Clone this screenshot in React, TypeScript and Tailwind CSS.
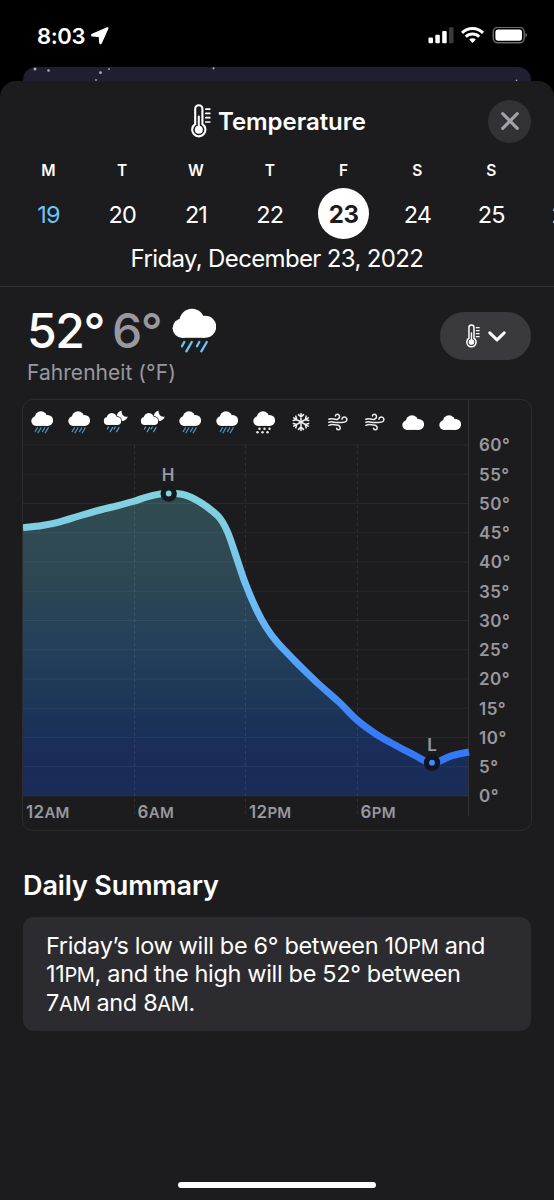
import React from "react";

const DAYS = [
  ["M", "19"],
  ["T", "20"],
  ["W", "21"],
  ["T", "22"],
  ["F", "23"],
  ["S", "24"],
  ["S", "25"],
];

const CURVE: [number, number][] = [
  [0, 527.7], [19, 525.5], [37, 521.8], [56, 516], [77, 510], [94, 505.8], [110, 501.5],
  [124, 497], [135, 494.4], [145.7, 493.3], [159, 494.2], [168, 497.2], [178, 502.8], [188, 510],
  [197.5, 519], [205, 533], [212, 553], [222.2, 583], [233.2, 609], [243, 627], [254, 642],
  [271, 660], [283, 672], [295, 683.5], [317, 703], [334, 720], [354, 734.7], [374, 746],
  [393, 756], [402, 761], [409, 763], [416, 761.5], [427, 756.3], [446, 752],
];

function smooth(points: [number, number][]) {
  const p = points.map(([x, y]) => [x, y - 400]);
  let d = `M${p[0][0]} ${p[0][1]}`;
  for (let i = 0; i < p.length - 1; i++) {
    const a = p[Math.max(i - 1, 0)];
    const b = p[i];
    const c = p[i + 1];
    const e = p[Math.min(i + 2, p.length - 1)];
    d += `C${b[0] + (c[0] - a[0]) / 6} ${b[1] + (c[1] - a[1]) / 6} ${c[0] - (e[0] - b[0]) / 6} ${c[1] - (e[1] - b[1]) / 6} ${c[0]} ${c[1]}`;
  }
  return d;
}

const LINE = smooth(CURVE);

function Thermometer({ className }: { className?: string }) {
  return (
    <svg viewBox="0 0 20 34" className={className} fill="none" stroke="#fff" strokeLinecap="round">
      <path d="M4.2 20.2V4.800a3.600 3.600 0 0 1 7.200 0v15.400a6.600 6.600 0 1 1-7.200 0Z" strokeWidth="2.100" />
      <path d="M7.800 12.500v12" strokeWidth="2" />
      <circle cx="7.800" cy="25.700" r="4" fill="#fff" stroke="none" />
      <path d="M14.800 5.100h4M14.800 9.400h4M14.800 13.700h4M14.800 18h4" strokeWidth="1.700" />
    </svg>
  );
}

function CloudShape() {
  return (
    <g fill="#fff">
      <circle cx="20" cy="13.3" r="12.6" />
      <circle cx="33.2" cy="18.8" r="11" />
      <circle cx="10.3" cy="20.2" r="9.7" />
      <rect x="10" y="14" width="23.2" height="15.8" />
    </g>
  );
}

function Rain({ className }: { className?: string }) {
  return (
    <svg viewBox="0 0 44 45" className={className}>
      <CloudShape />
      <path
        d="M12.3 34 10 38.200M19.800 34l-5.500 9.300M27.300 34 25 38.200M34.800 34l-5.500 9.300"
        stroke="#6cc5f5"
        strokeWidth="2.300"
        strokeLinecap="round"
      />
    </svg>
  );
}

function SmallRain() {
  return (
    <svg viewBox="0 0 44 46" className="h-[23px] w-[22px]">
      <CloudShape />
      <path d="M13 33.500 8.500 41M20 33.500l-6 10M27.500 33.500 23 41M34.500 33.500l-6 10" stroke="#4a92bd" strokeWidth="2.700" strokeLinecap="round" />
    </svg>
  );
}

function NightRain() {
  return (
    <svg viewBox="0 0 25 24" className="h-6 w-[25px]">
      <path
        d="M18.600 .4C15.400 1.200 13.400 4 13.900 7 14.500 10 17.400 11.400 20.200 10.900c2.300-.4 4.100-2 4.600-4.300-1.700 .5-3.200 .2-4.300-.9C19.100 4.300 18.400 2.400 18.600 .4Z"
        fill="#fff"
      />
      <g transform="translate(.6 2.700) scale(.41)">
        <g stroke="#1c1c1e" strokeWidth="3.600">
          <circle cx="20" cy="13.300" r="12.600" />
          <circle cx="33" cy="20" r="9.800" />
        </g>
        <g fill="#fff">
          <circle cx="20" cy="13.300" r="12.600" />
          <circle cx="33" cy="20" r="9.800" />
          <circle cx="10.300" cy="20.200" r="9.700" />
          <rect x="10" y="14" width="23" height="15.800" />
        </g>
      </g>
      <path d="m5.600 17-1.200 2M9.600 17.500l-2.400 4.200M12.300 17l-1.200 2M16 17.500l-2.400 4.200" stroke="#56a9d8" strokeWidth="1.200" strokeLinecap="round" />
    </svg>
  );
}

function Snow() {
  return (
    <svg viewBox="0 0 44 46" className="h-[23px] w-[22px]">
      <CloudShape />
      <g fill="#e8e8ea">
        <circle cx="13" cy="35.500" r="2.500" />
        <circle cx="23" cy="35.500" r="2.500" />
        <circle cx="33" cy="35.500" r="2.500" />
        <circle cx="9" cy="42.500" r="2.500" />
        <circle cx="19" cy="42.500" r="2.500" />
        <circle cx="29" cy="42.500" r="2.500" />
      </g>
    </svg>
  );
}

function Snowflake() {
  return (
    <svg viewBox="-10 -10 20 20" className="h-5 w-5" fill="none" stroke="#f2f2f4" strokeWidth="1.500" strokeLinecap="round">
      {[0, 60, 120, 180, 240, 300].map((a) => (
        <path key={a} transform={`rotate(${a})`} d="M0 0V-8.400M-2.500-7.400 0-5l2.500-2.400" />
      ))}
    </svg>
  );
}

function Wind() {
  return (
    <svg viewBox="0 0 20 18" className="h-[18px] w-5" fill="none" stroke="#ececee" strokeWidth="1.500" strokeLinecap="round">
      <path d="M.9 6.200c3.300-1.500 5.200 .8 8.300 .2 3.200-.8 2.900-5.200 .2-5.100-1.200 0-1.900 .8-1.900 1.600" />
      <path d="M.9 9.300c3.600-1.400 5.600 .6 9.400 .2 3-.3 6.100 .6 7.900-1.200 1.500-1.800 .3-4.300-1.900-4.300-1.500 0-2.400 1.100-2.300 2.200" />
      <path d="M.9 12.300c3.200-1.600 5.200-.4 8-.4 3.600 .1 4.500 4.900 1.400 4.900-1.100 0-1.700-.7-1.700-1.500" />
    </svg>
  );
}

function Cloud() {
  return (
    <svg viewBox="0 0 44 30" className="ml-px mt-px h-[15px] w-[22px]">
      <CloudShape />
    </svg>
  );
}

const HOURS = [SmallRain, SmallRain, NightRain, NightRain, SmallRain, SmallRain, Snow, Snowflake, Wind, Wind, Cloud, Cloud];

function StatusBar() {
  return (
    <div className="flex h-[67px] items-start pl-[37px] pr-[27px] pt-[22px]">
      <span className="w-12 text-[22px] font-semibold leading-7 tracking-[-0.4px]">8:03</span>
      <svg viewBox="0 0 18 18" className="ml-[6px] mt-[5px] h-[18px] w-[18px]">
        <path d="M16.200 .9 1.300 7.300c-.9 .4-.7 1.700 .3 1.700l6.600 .4.600 6.400c0 1 1.100 1.200 1.500 .3L16.800 1.500c.2-.5-.1-.8-.6-.6Z" fill="#fff" stroke="#fff" strokeWidth="1.200" strokeLinejoin="round" />
      </svg>
      <svg viewBox="0 0 100 18" className="ml-auto mt-[5px] h-[18px] w-[100px]">
        <rect x="1.500" y="10.500" width="4.500" height="5.700" rx="1" fill="#fff" />
        <rect x="8.300" y="7.800" width="4.500" height="8.400" rx="1" fill="#fff" />
        <rect x="15.200" y="4" width="4.500" height="12.200" rx="1" fill="#fff" />
        <rect x="22" y="0.300" width="4.500" height="15.900" rx="1" fill="#3a3a3a" />
        <g fill="none" stroke="#fff" strokeWidth="3">
          <path d="M35 5.900a15 15 0 0 1 21 0" />
          <path d="M38.800 9.700a9.600 9.600 0 0 1 13.400 0" />
        </g>
        <path d="M42.200 12.600a4.700 4.700 0 0 1 6.600 0L45.500 16Z" fill="#fff" />
        <rect x="66.200" y="0.400" width="31" height="15.400" rx="4.500" fill="none" stroke="#6d6d6d" strokeWidth="1.400" />
        <rect x="68.400" y="2.500" width="26.600" height="11.200" rx="2.700" fill="#fff" />
        <path d="M98.500 5.800c2 .8 2 3.800 0 4.600Z" fill="#6d6d6d" />
      </svg>
    </div>
  );
}

function Chart() {
  return (
    <div className="mx-[22px] mt-[13px] flex h-[432px] rounded-[11px] border border-[#2d2d30]">
      <div className="relative w-[447px]">
        <svg viewBox="0 0 447 430" className="absolute left-0 top-0 h-[430px] w-[447px]">
          <defs>
            <linearGradient id="stroke" gradientUnits="userSpaceOnUse" x1="0" y1="93" x2="0" y2="363">
              <stop offset="0" stopColor="#82d3df" />
              <stop offset=".2" stopColor="#7ccae8" />
              <stop offset=".43" stopColor="#6abaf8" />
              <stop offset=".65" stopColor="#50a0fb" />
              <stop offset=".88" stopColor="#387bf7" />
              <stop offset="1" stopColor="#3578f6" />
            </linearGradient>
            <linearGradient id="area" gradientUnits="userSpaceOnUse" x1="0" y1="93" x2="0" y2="396">
              <stop offset="0" stopColor="#304c50" />
              <stop offset=".25" stopColor="#2e4853" />
              <stop offset=".5" stopColor="#24405a" />
              <stop offset=".67" stopColor="#1e3858" />
              <stop offset=".82" stopColor="#192e58" />
              <stop offset="1" stopColor="#1a2b58" />
            </linearGradient>
          </defs>
          <path d={`${LINE}V396H0Z`} fill="url(#area)" />
          {Array.from({ length: 13 }, (_, i) => (
            <path key={i} d={`M0 ${45 + i * 29.25}H446`} stroke="#fff" strokeOpacity=".06" />
          ))}
          {[111.5, 222.5, 334.5].map((x) => (
            <path key={x} d={`M${x} 45V416`} stroke="#fff" strokeOpacity=".09" strokeDasharray="3 3" />
          ))}
          <path d="M445.500 0V416" stroke="#323235" />
          <path d={LINE} fill="none" stroke="url(#stroke)" strokeWidth="7" />
          <circle cx="145.700" cy="93.500" r="8.200" fill="#161a1c" />
          <circle cx="145.700" cy="93.500" r="2.900" fill="#82d3df" />
          <circle cx="409" cy="362.700" r="8.200" fill="#121520" />
          <circle cx="409" cy="362.700" r="2.900" fill="#3f8cff" />
          <g fill="#98989e" fontSize="17" fontWeight="600" textAnchor="middle" fontFamily="Inter, sans-serif">
            <text x="145.200" y="81">H</text>
            <text x="409" y="350.500">L</text>
          </g>
        </svg>
        <div className="flex h-11 w-[445px] items-center">
          {HOURS.map((Icon, i) => (
            <span key={i} className="flex flex-1 items-center justify-center">
              <Icon />
            </span>
          ))}
        </div>
        <div className="mt-[356px] grid w-[446px] grid-cols-4 text-[17px] font-semibold leading-6 text-[#98989e]">
          {[["12", "AM"], ["6", "AM"], ["12", "PM"], ["6", "PM"]].map(([h, m]) => (
            <span key={h + m} className="pl-[3px] tracking-[0.3px]">
              {h}
              <span className="text-[15px]">{m}</span>
            </span>
          ))}
        </div>
      </div>
      <div className="flex flex-col pl-[9px] pt-[31.400px] text-[17px] font-semibold tracking-[0.500px] text-[#98989e]">
        {Array.from({ length: 13 }, (_, i) => (
          <span key={i} className="h-[29.250px] leading-[29.250px]">{60 - i * 5}°</span>
        ))}
      </div>
    </div>
  );
}

export default function App() {
  return (
    <div className="flex h-[1200px] w-[554px] flex-col overflow-hidden bg-black font-['Inter',sans-serif] text-white">
      <StatusBar />
      <div className="mx-[23px] h-[14px] rounded-t-[13px] bg-[#201f31]">
        <svg viewBox="0 0 508 14" className="h-[14px] w-[508px]" fill="#aaa9bd">
          <circle cx="12" cy="2" r="1.500" />
          <circle cx="25.500" cy="3.500" r="1.300" />
          <circle cx="77.500" cy="5.700" r="1.400" />
          <circle cx="86" cy="2" r=".9" />
          <circle cx="73" cy="13" r=".9" />
          <circle cx="190.500" cy="1.300" r="1.100" />
          <circle cx="493.500" cy="13.300" r=".8" />
        </svg>
      </div>
      <div className="relative flex flex-1 flex-col rounded-t-[16px] bg-[#1c1c1e]">
        <header className="flex h-[206px] flex-col border-b border-[#313134]">
          <div className="flex h-20 items-center">
            <Thermometer className="ml-[191px] h-[34px] w-5" />
            <h1 className="ml-[7px] mt-[2px] text-[24px] font-semibold leading-8 tracking-[-0.050px]">Temperature</h1>
            <button aria-label="Close" className="ml-auto mr-[23px] flex h-[43px] w-[43px] items-center justify-center rounded-full bg-[#323236]">
              <svg viewBox="0 0 18 18" className="h-[18px] w-[18px]">
                <path d="m1.700 1.700 14.600 14.600m0-14.600-14.600 14.600" stroke="#a2a2a8" strokeWidth="3.100" strokeLinecap="round" />
              </svg>
            </button>
          </div>
          <div className="flex w-[700px] pl-[11.500px]">
            {DAYS.map(([d, n], i) => (
              <div key={n} className="flex w-[73.800px] flex-col items-center">
                <span className="pt-px text-[15.500px] font-semibold leading-[18px]">{d}</span>
                <span
                  className={
                    i === 4
                      ? "mt-2 flex h-[51px] w-[51px] items-center justify-center rounded-full bg-white pt-[2px] text-[24px] font-bold tracking-[-0.500px] text-[#1c1c1e]"
                      : i === 0
                        ? "mt-2 flex h-[51px] items-center pt-[2px] text-[23.500px] tracking-[-0.900px] text-[#70c4f4]"
                        : "mt-2 flex h-[51px] items-center pt-[2px] text-[23.500px] tracking-[-0.900px]"
                  }
                >
                  {n}
                </span>
              </div>
            ))}
            <div className="flex w-[73.800px] flex-col items-center pt-[27px]">
              <span className="flex h-[51px] items-center pt-[2px] text-[23.500px] tracking-[-0.900px]">26</span>
            </div>
          </div>
          <p className="mt-1 text-center text-[24px] leading-8 tracking-[-0.640px]">Friday, December 23, 2022</p>
        </header>
        <div className="flex h-[99px] pl-[27px] pr-[23px]">
          <div className="flex flex-col">
            <div className="mt-[15px] flex h-[56px] items-center text-[48px] font-medium">
              <span className="pt-px tracking-[-1.400px]">52°</span>
              <span className="ml-2 pt-px tracking-[-1.500px] text-[#98989e]">6°</span>
              <Rain className="ml-[11px] h-[45px] w-11" />
            </div>
            <span className="mt-[1.500px] text-[21px] leading-[26px] tracking-[0.050px] text-[#98989e]">Fahrenheit (°F)</span>
          </div>
          <button aria-label="Choose condition" className="ml-auto mt-[25px] flex h-12 w-[91px] items-center rounded-full bg-[#3a3a3e] pl-[26px]">
            <Thermometer className="h-[24px] w-[14px]" />
            <svg viewBox="0 0 18 11" className="ml-2 h-[11px] w-[18px]" fill="none">
              <path d="m1.800 1.800 7.200 7 7.200-7" stroke="#fff" strokeWidth="3" strokeLinecap="round" strokeLinejoin="round" />
            </svg>
          </button>
        </div>
        <Chart />
        <h2 className="ml-[23px] mt-[36px] text-[27px] font-semibold leading-[38px] tracking-[-0.120px]">Daily Summary</h2>
        <p className="mx-[23px] mt-[12px] h-[114px] rounded-[11px] bg-[#2c2c30] pl-[23px] pt-[14.500px] text-[23.500px] leading-[28.800px] tracking-[-0.340px]">
          Friday’s low will be 6° between 10<span className="text-[20px] leading-[0]">PM</span> and
          <br />
          11<span className="text-[20px] leading-[0]">PM</span>, and the high will be 52° between
          <br />7<span className="text-[20px] leading-[0]">AM</span> and 8<span className="text-[20px] leading-[0]">AM</span>.
        </p>
        <div className="mx-auto mb-3 mt-auto h-[6px] w-[198px] rounded-full bg-white" />
      </div>
    </div>
  );
}
